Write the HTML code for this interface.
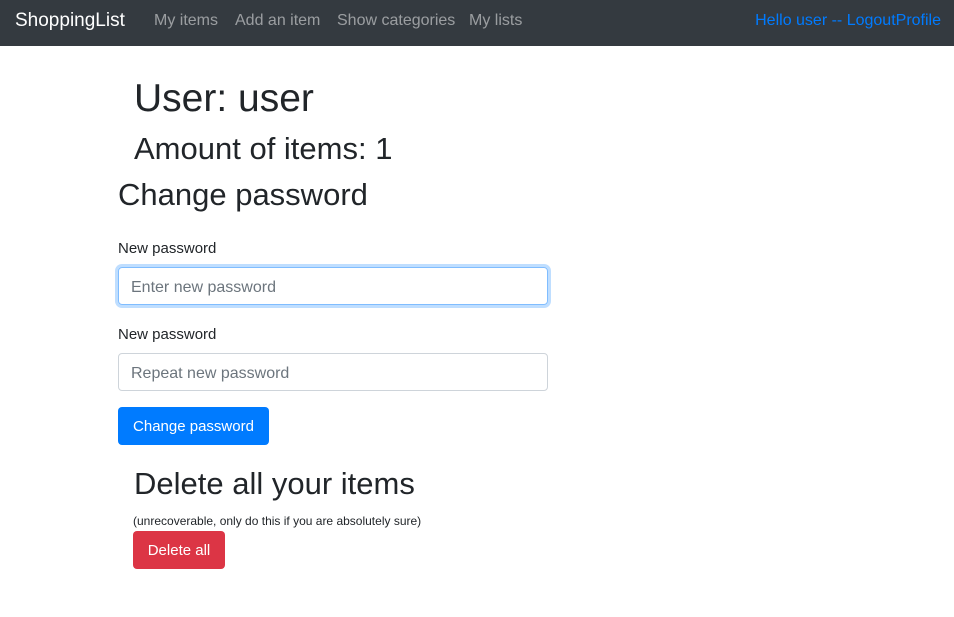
<!DOCTYPE html>
<html><head><meta charset="utf-8"><style>
*{box-sizing:border-box;margin:0;padding:0}
body{width:954px;height:617px;background:#fff;font-family:"Liberation Sans",sans-serif;color:#212529;position:relative;overflow:hidden}
.nav{position:absolute;left:0;top:0;width:954px;height:46px;background:#343a40}
.nav span{position:absolute;top:12px;font-size:16px;color:rgba(255,255,255,.5);white-space:nowrap}
.nav .brand{left:15px;top:10px;font-size:19px;color:#fff}
.nav .right{right:13px;color:#007bff;font-size:16px}
.a{position:absolute;white-space:nowrap;line-height:1.2}
.inp{position:absolute;left:118px;width:430px;height:38px;border:1px solid #ced4da;border-radius:4px;padding:0 12px;font-size:16px;line-height:39px;color:#6c757d}
.btn{position:absolute;border-radius:4px;color:#fff;font-size:16px;text-align:center;line-height:40px;height:38px}
</style></head><body>
<div class="nav">
<span class="brand">ShoppingList</span>
<span style="left:154px">My items</span>
<span style="left:235px">Add an item</span>
<span style="left:337px">Show categories</span>
<span style="left:469px">My lists</span>
<span class="right">Hello user -- LogoutProfile</span>
</div>
<div class="a" style="left:134px;top:76px;font-size:39px">User: user</div>
<div class="a" style="left:134px;top:130px;font-size:31px">Amount of items: 1</div>
<div class="a" style="left:118px;top:176px;font-size:31px">Change password</div>
<div class="a" style="left:118px;top:240px;font-size:15px">New password</div>
<div class="inp" style="top:267px;border-color:#80bdff;box-shadow:0 0 0 3px rgba(0,123,255,.25)">Enter new password</div>
<div class="a" style="left:118px;top:326px;font-size:15px">New password</div>
<div class="inp" style="top:353px">Repeat new password</div>
<div class="btn" style="left:118px;top:407px;width:151px;background:#007bff;font-size:15px">Change password</div>
<div class="a" style="left:134px;top:465px;font-size:31px">Delete all your items</div>
<div class="a" style="left:133px;top:514px;font-size:12px">(unrecoverable, only do this if you are absolutely sure)</div>
<div class="btn" style="left:133px;top:531px;width:92px;background:#dc3545;font-size:15px">Delete all</div>
</body></html>
